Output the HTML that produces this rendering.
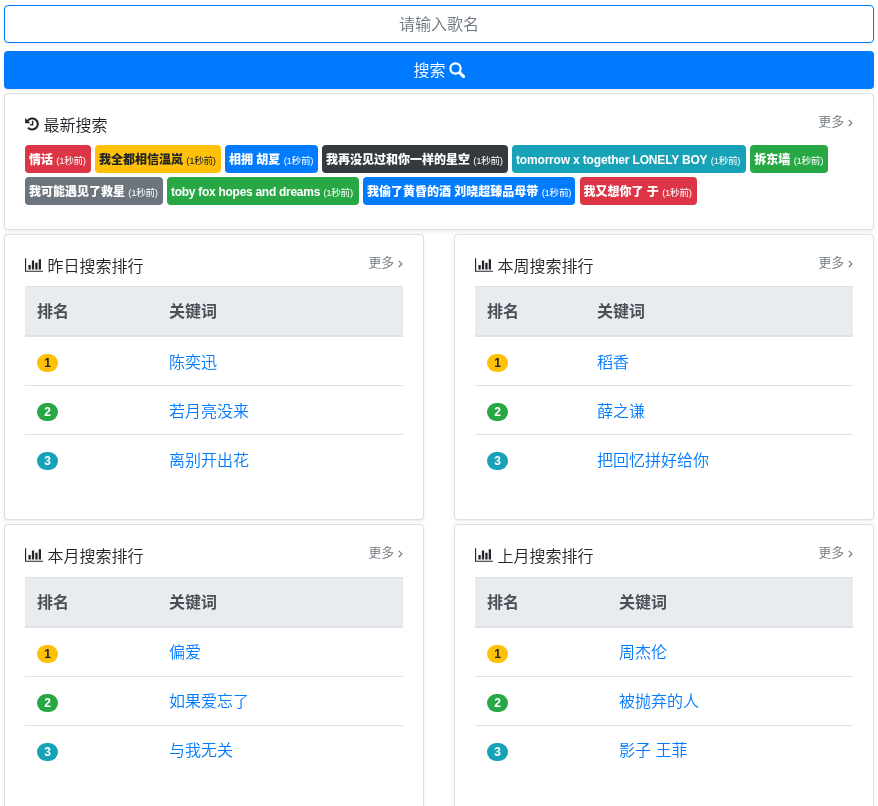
<!DOCTYPE html>
<html lang="zh-CN">
<head>
<meta charset="utf-8">
<title>搜索</title>
<style>
*,*::before,*::after{box-sizing:border-box}
html,body{margin:0;padding:0}
body{width:878px;height:806px;overflow:hidden;background:#fff;color:#212529;
 font-family:"Liberation Sans","Noto Sans CJK SC",sans-serif;font-size:16px;line-height:1.5;font-weight:350}
a{text-decoration:none;color:#007bff}
.wrap{will-change:transform;position:absolute;left:4px;top:5px;width:870px}
.inp{display:block;width:100%;height:38px;padding:7px 12px 5px;border:1px solid #007bff;border-radius:4px;background:#fff;
 text-align:center;color:#6c757d;font-size:16px;line-height:24px;margin-bottom:8px;box-shadow:0 2px 4px rgba(0,0,0,.075)}
.btn{box-shadow:0 2px 4px rgba(0,0,0,.075);display:block;width:100%;height:38px;padding:8px 12px 6px;border-radius:4px;background:#007bff;color:#fff;text-align:center;
 font-size:16px;line-height:24px;margin-bottom:4px}
.btn svg{vertical-align:-2.1px;margin-left:3px}
.card{position:relative;background:#fff;border:1px solid rgba(0,0,0,.125);border-radius:4px;margin-bottom:4px;
 box-shadow:0 2px 4px rgba(0,0,0,.075)}
.card-body{padding:20px}
.title{font-size:16px;line-height:19.2px;margin:0 0 12px 0;height:19.2px;position:relative}
.title .tx{position:absolute;top:1.5px;white-space:nowrap}
.title svg.ic{position:absolute;left:0}
.more{position:absolute;right:0;top:-2.3px;padding-right:9px;font-size:12.8px;color:#6c757d;line-height:19.2px}
.more svg{position:absolute;right:.4px;top:7.1px}
.tags{font-size:0;line-height:0}
.tag{display:inline-block;height:27.5px;margin:0 4.5px 4.5px 0;padding:8.5px 4px 0 4px;border-radius:4px;color:#fff;font-size:12px;
 line-height:12px;font-weight:900;white-space:nowrap;vertical-align:top;overflow:hidden}
.tag small{font-size:9.6px;font-weight:400;letter-spacing:-.3px}
.row{display:flex;justify-content:space-between}
.row .card{width:420px}
table{width:100%;border-collapse:collapse;margin:0 0 16px 0}
th,td{padding:13px 12px 11px;text-align:left;vertical-align:top;border-top:1px solid #dee2e6;line-height:24px}
thead th{background:#e9ecef;color:#495057;border-bottom:2px solid #dee2e6;border-top:1px solid #dee2e6;font-weight:700;vertical-align:bottom}
td a{position:relative;top:.5px}
.pill{display:inline-block;min-width:21px;height:18px;padding:3px 7.2px;border-radius:10rem;font-size:12px;line-height:12px;font-weight:700;color:#fff;text-align:center;vertical-align:baseline}
.w{background:#ffc107;color:#212529}.s{background:#28a745}.i{background:#17a2b8}
.d{background:#dc3545}.p{background:#007bff}.k{background:#343a40}.g{background:#6c757d}
</style>
</head>
<body>
<div class="wrap">
 <div class="inp">请输入歌名</div>
 <div class="btn">搜索<svg width="16" height="16" viewBox="0 0 16 16"><circle cx="6.5" cy="6.5" r="5.15" fill="none" stroke="#fff" stroke-width="2.2"/><path d="M10.6 10.6 L14.6 14.6" stroke="#fff" stroke-width="2.9" stroke-linecap="round"/></svg></div>

 <div class="card">
  <div class="card-body">
   <div class="title"><svg class="ic" style="top:2.5px" width="14" height="14" viewBox="0 0 14 14"><path d="M2.54 4.06 A5.55 5.55 0 1 1 3.00 10.57" fill="none" stroke="#212529" stroke-width="2.1"/><path d="M0.1 0.9 L0.1 6.3 L5.5 6.3 Z" fill="#212529"/><path d="M7.6 3.8 V7.9 H4.9" fill="none" stroke="#212529" stroke-width="1.4"/></svg><span class="tx" style="left:18.5px">最新搜索</span>
    <span class="more">更多<svg width="5" height="8" viewBox="0 0 5 8"><path d="M0.8 0.8 L3.9 3.9 L0.8 7" fill="none" stroke="#6c757d" stroke-width="1.1"/></svg></span>
   </div>
   <div class="tags">
    <a class="tag d" style="width:65.5px">情话 <small>(1秒前)</small></a><a class="tag w" style="width:125.5px">我全都相信温岚 <small>(1秒前)</small></a><a class="tag p" style="width:92.5px">相拥 胡夏 <small>(1秒前)</small></a><a class="tag k" style="width:185.5px">我再没见过和你一样的星空 <small>(1秒前)</small></a><a class="tag i" style="width:233.8px"><span style="letter-spacing:-.175px">tomorrow x together LONELY BOY</span> <small>(1秒前)</small></a><a class="tag s" style="width:77.8px;margin-right:0">拆东墙 <small>(1秒前)</small></a><br>
    <a class="tag g" style="width:137.5px">我可能遇见了救星 <small>(1秒前)</small></a><a class="tag s" style="width:191.5px"><span style="letter-spacing:-.28px">toby fox hopes and dreams</span> <small>(1秒前)</small></a><a class="tag p" style="width:212px">我偷了黄昏的酒 刘晓超臻品母带 <small>(1秒前)</small></a><a class="tag d" style="width:117.5px">我又想你了 于 <small>(1秒前)</small></a>
   </div>
  </div>
 </div>

 <div class="row">
  <div class="card">
   <div class="card-body">
    <div class="title"><svg class="ic" style="top:2px" width="18.3" height="16" viewBox="0 0 2048 1792"><path fill="#212529" d="M640 896v512h-256v-512h256zM1024 384v1024h-256v-1024h256zM2048 1536v128h-2048v-1536h128v1408h1920zM1408 640v768h-256v-768h256zM1792 256v1152h-256v-1152h256z"/></svg><span class="tx" style="left:22.5px">昨日搜索排行</span>
     <span class="more">更多<svg width="5" height="8" viewBox="0 0 5 8"><path d="M0.8 0.8 L3.9 3.9 L0.8 7" fill="none" stroke="#6c757d" stroke-width="1.1"/></svg></span>
    </div>
    <table>
     <colgroup><col style="width:132px"><col></colgroup>
     <thead><tr><th>排名</th><th>关键词</th></tr></thead>
     <tbody>
      <tr><td><span class="pill w">1</span></td><td><a>陈奕迅</a></td></tr>
      <tr><td><span class="pill s">2</span></td><td><a>若月亮没来</a></td></tr>
      <tr><td><span class="pill i">3</span></td><td><a>离别开出花</a></td></tr>
     </tbody>
    </table>
   </div>
  </div>
  <div class="card">
   <div class="card-body">
    <div class="title"><svg class="ic" style="top:2px" width="18.3" height="16" viewBox="0 0 2048 1792"><path fill="#212529" d="M640 896v512h-256v-512h256zM1024 384v1024h-256v-1024h256zM2048 1536v128h-2048v-1536h128v1408h1920zM1408 640v768h-256v-768h256zM1792 256v1152h-256v-1152h256z"/></svg><span class="tx" style="left:22.5px">本周搜索排行</span>
     <span class="more">更多<svg width="5" height="8" viewBox="0 0 5 8"><path d="M0.8 0.8 L3.9 3.9 L0.8 7" fill="none" stroke="#6c757d" stroke-width="1.1"/></svg></span>
    </div>
    <table>
     <colgroup><col style="width:110px"><col></colgroup>
     <thead><tr><th>排名</th><th>关键词</th></tr></thead>
     <tbody>
      <tr><td><span class="pill w">1</span></td><td><a>稻香</a></td></tr>
      <tr><td><span class="pill s">2</span></td><td><a>薛之谦</a></td></tr>
      <tr><td><span class="pill i">3</span></td><td><a>把回忆拼好给你</a></td></tr>
     </tbody>
    </table>
   </div>
  </div>
 </div>

 <div class="row">
  <div class="card">
   <div class="card-body">
    <div class="title"><svg class="ic" style="top:2px" width="18.3" height="16" viewBox="0 0 2048 1792"><path fill="#212529" d="M640 896v512h-256v-512h256zM1024 384v1024h-256v-1024h256zM2048 1536v128h-2048v-1536h128v1408h1920zM1408 640v768h-256v-768h256zM1792 256v1152h-256v-1152h256z"/></svg><span class="tx" style="left:22.5px">本月搜索排行</span>
     <span class="more">更多<svg width="5" height="8" viewBox="0 0 5 8"><path d="M0.8 0.8 L3.9 3.9 L0.8 7" fill="none" stroke="#6c757d" stroke-width="1.1"/></svg></span>
    </div>
    <table>
     <colgroup><col style="width:132px"><col></colgroup>
     <thead><tr><th>排名</th><th>关键词</th></tr></thead>
     <tbody>
      <tr><td><span class="pill w">1</span></td><td><a>偏爱</a></td></tr>
      <tr><td><span class="pill s">2</span></td><td><a>如果爱忘了</a></td></tr>
      <tr><td><span class="pill i">3</span></td><td><a>与我无关</a></td></tr>
     </tbody>
    </table>
   </div>
  </div>
  <div class="card">
   <div class="card-body">
    <div class="title"><svg class="ic" style="top:2px" width="18.3" height="16" viewBox="0 0 2048 1792"><path fill="#212529" d="M640 896v512h-256v-512h256zM1024 384v1024h-256v-1024h256zM2048 1536v128h-2048v-1536h128v1408h1920zM1408 640v768h-256v-768h256zM1792 256v1152h-256v-1152h256z"/></svg><span class="tx" style="left:22.5px">上月搜索排行</span>
     <span class="more">更多<svg width="5" height="8" viewBox="0 0 5 8"><path d="M0.8 0.8 L3.9 3.9 L0.8 7" fill="none" stroke="#6c757d" stroke-width="1.1"/></svg></span>
    </div>
    <table>
     <colgroup><col style="width:132px"><col></colgroup>
     <thead><tr><th>排名</th><th>关键词</th></tr></thead>
     <tbody>
      <tr><td><span class="pill w">1</span></td><td><a>周杰伦</a></td></tr>
      <tr><td><span class="pill s">2</span></td><td><a>被抛弃的人</a></td></tr>
      <tr><td><span class="pill i">3</span></td><td><a>影子 王菲</a></td></tr>
     </tbody>
    </table>
   </div>
  </div>
 </div>
</div>
</body>
</html>
